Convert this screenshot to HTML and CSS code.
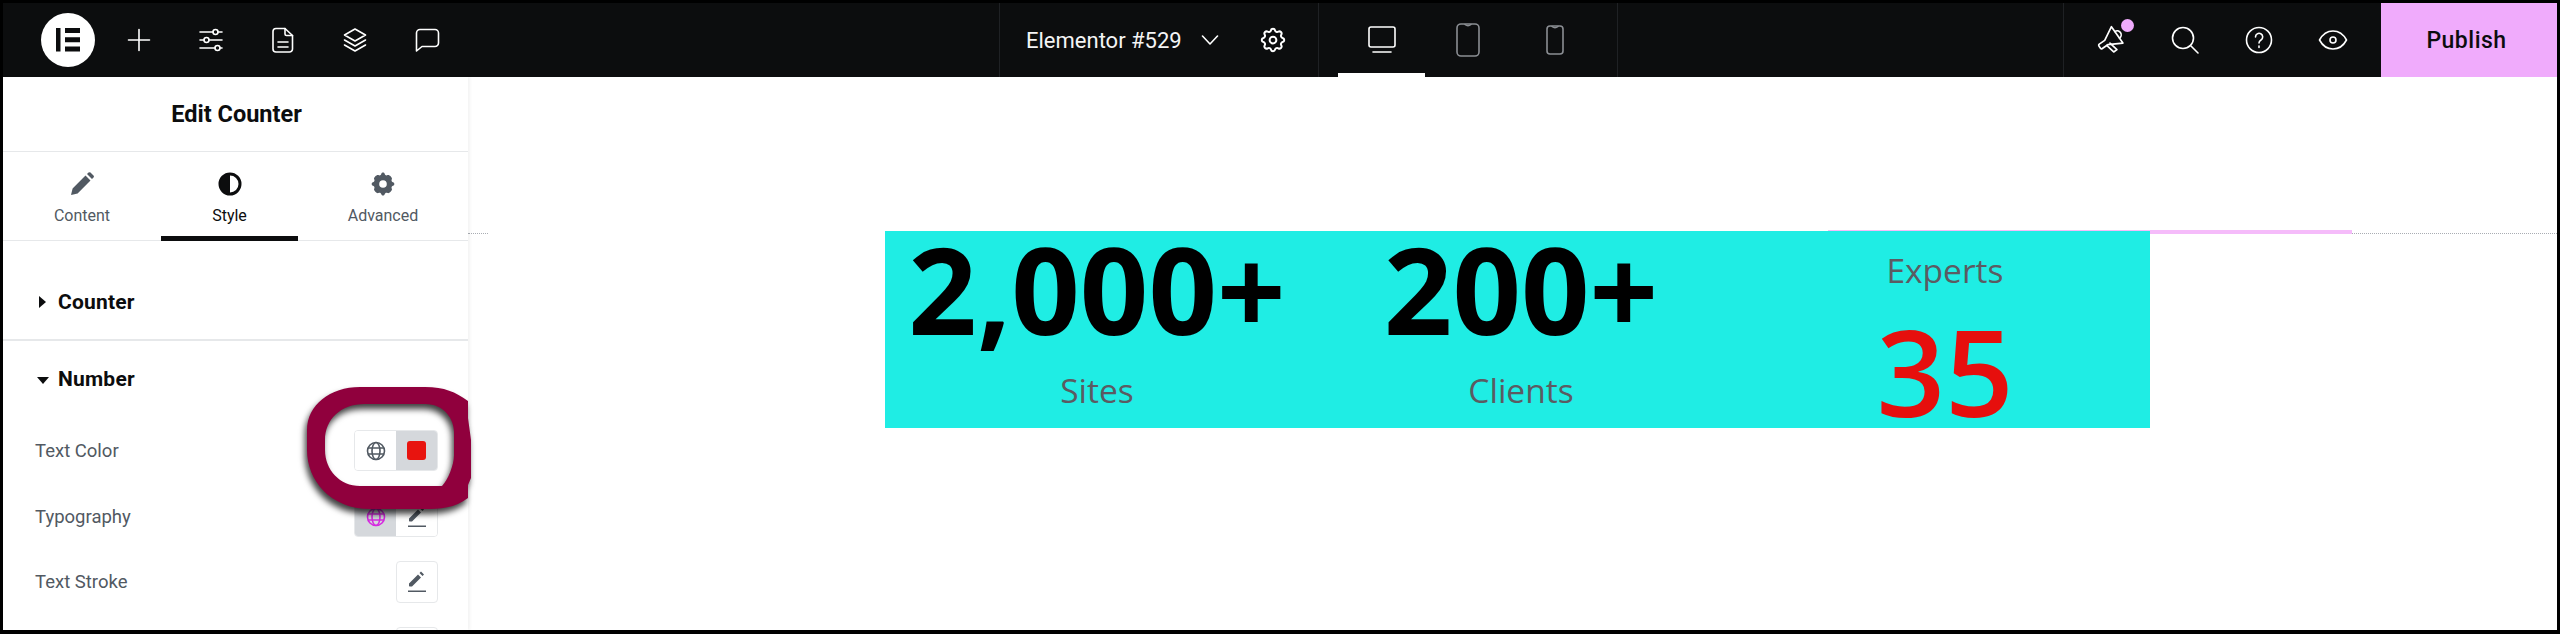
FILE: index.html
```html
<!DOCTYPE html>
<html lang="en">
<head>
<meta charset="utf-8">
<title>Elementor #529</title>
<link rel="stylesheet" href="styles.css">
</head>
<body>
<div class="frame">
  <header class="topbar">
    <div class="bar-left">
      <div class="logo">
        <svg width="24" height="24" viewBox="0 0 24 24"><path fill="#0c0d0e" d="M0 0h4.500v23.500H0zM9 0h15v5H9zM9 9.300h15v5H9zM9 18.500h15v5H9z"/></svg>
      </div>
      <div class="tb-btn"><svg width="24" height="24" viewBox="0 0 24 24" class="ln"><path d="M12 1.500v21M1.500 12h21"/></svg></div>
      <div class="tb-btn"><svg width="26" height="26" viewBox="0 0 26 26" class="ln"><path d="M2 5h13M20 5h4M2 13h4M11 13h13M2 21h15M22 21h2"/><circle cx="17.500" cy="5" r="2.500"/><circle cx="8.500" cy="13" r="2.500"/><circle cx="19.500" cy="21" r="2.500"/></svg></div>
      <div class="tb-btn"><svg width="24" height="26" viewBox="0 0 24 26" class="ln"><path d="M5 1.500h9l7.500 7V22a3 3 0 0 1-3 3H5a3 3 0 0 1-3-3V4.500a3 3 0 0 1 3-3z"/><path d="M14 1.500V7a1.500 1.500 0 0 0 1.500 1.500h6M7 15h10M7 20h10"/></svg></div>
      <div class="tb-btn"><svg width="26" height="26" viewBox="0 0 26 26" class="ln"><path d="M13 2l10.500 6L13 14 2.500 8z"/><path d="M2.500 13L13 19l10.500-6M2.500 18L13 24l10.500-6"/></svg></div>
      <div class="tb-btn"><svg width="26" height="26" viewBox="0 0 26 26" class="ln"><path d="M6 2.500h15a3.500 3.500 0 0 1 3.500 3.500v10a3.500 3.500 0 0 1-3.500 3.500H8L2.500 24V6A3.500 3.500 0 0 1 6 2.500z"/></svg></div>
    </div>
    <div class="bar-doc">
      <span class="doc-title">Elementor #529</span>
      <svg class="ln chev" width="18" height="10" viewBox="0 0 18 10"><path d="M1.500 1l7.500 8 7.500-8"/></svg>
      <svg class="ln gear" width="30" height="30" viewBox="0 0 24 24"><path d="M10.325 4.317c.426-1.756 2.924-1.756 3.35 0a1.724 1.724 0 0 0 2.573 1.066c1.543-.94 3.31.826 2.37 2.37a1.724 1.724 0 0 0 1.065 2.572c1.756.426 1.756 2.924 0 3.35a1.724 1.724 0 0 0-1.066 2.573c.94 1.543-.826 3.31-2.37 2.37a1.724 1.724 0 0 0-2.572 1.065c-.426 1.756-2.924 1.756-3.35 0a1.724 1.724 0 0 0-2.573-1.066c-1.543.94-3.31-.826-2.37-2.37a1.724 1.724 0 0 0-1.065-2.572c-1.756-.426-1.756-2.924 0-3.35a1.724 1.724 0 0 0 1.066-2.573c-.94-1.543.826-3.31 2.37-2.37 1 .608 2.296.07 2.572-1.065z"/><circle cx="12" cy="12" r="2.700"/></svg>
    </div>
    <div class="bar-devices">
      <div class="dev dev-active"><svg class="ln" width="28" height="28" viewBox="0 0 28 28"><rect x="1" y="1" width="26" height="20" rx="2"/><path d="M5 26h18"/></svg></div>
      <div class="dev dev-muted"><svg class="ln" width="24" height="34" viewBox="0 0 24 34"><rect x="1" y="1" width="22" height="32" rx="4"/><path d="M9 1.500q3 2.500 6 0"/></svg></div>
      <div class="dev dev-muted"><svg class="ln" width="18" height="30" viewBox="0 0 18 30"><rect x="1" y="1" width="16" height="28" rx="3"/><path d="M6 1.500q3 2.500 6 0"/></svg></div>
    </div>
    <div class="bar-space"></div>
    <div class="bar-tools">
      <div class="tool">
        <svg class="ln mega" width="32" height="32" viewBox="0 0 24 24"><g transform="rotate(-35 12 12)"><path d="M3 9.500h5l10-5.500v15l-10-5.500H3a1 1 0 0 1-1-1v-2a1 1 0 0 1 1-1z"/><path d="M7 13.500l1.500 7h3l-1.500-7M18 8.500a3 3 0 0 1 0 6"/></g></svg>
        <span class="dot"></span>
      </div>
      <div class="tool"><svg class="ln" width="28" height="28" viewBox="0 0 28 28"><circle cx="12" cy="12" r="10.500"/><path d="M19.500 19.500l7.500 7.500"/></svg></div>
      <div class="tool"><svg class="ln" width="28" height="28" viewBox="0 0 28 28"><circle cx="14" cy="14" r="12.500"/><path d="M10.500 11a3.600 3.600 0 1 1 5.500 3c-1.300.8-2 1.500-2 3M14 20v1.500"/></svg></div>
      <div class="tool"><svg class="ln" width="30" height="22" viewBox="0 0 30 22"><path d="M1.500 11C5 4.500 10 2 15 2s10 2.500 13.500 9C25 17.500 20 20 15 20S5 17.500 1.500 11z"/><circle cx="15" cy="11" r="3"/></svg></div>
    </div>
    <div class="publish">Publish</div>
  </header>

  <div class="workspace">
    <aside class="panel">
      <div class="panel-head">Edit Counter</div>
      <nav class="tabs">
        <div class="tab tab-content">
          <svg width="24" height="24" viewBox="0 0 24 24"><path fill="#515962" d="M1 23l1.600-6.600L15.500 3.500l5 5L7.600 21.400zM17 2l1.500-1.400a1.500 1.500 0 0 1 2 0l3 3a1.500 1.500 0 0 1 0 2L22 7z"/></svg>
          <span>Content</span>
        </div>
        <div class="tab tab-style tab-active">
          <svg width="24" height="24" viewBox="0 0 24 24"><circle cx="12" cy="12" r="10" fill="#fff" stroke="#0c0d0e" stroke-width="3"/><path fill="#0c0d0e" d="M12 2a10 10 0 0 0 0 20z"/></svg>
          <span>Style</span>
        </div>
        <div class="tab tab-adv">
          <svg width="24" height="24" viewBox="0 0 24 24"><path fill="#515962" d="M10.325 1.800c.426-1.756 2.924-1.756 3.350 0 .3 1.400 1.600 2 2.900 1.300 1.543-.94 5.200 2.700 4.260 4.250-.7 1.200-.2 2.500 1.200 2.900 1.756.426 1.756 3.200 0 3.600-1.400.4-1.900 1.700-1.200 2.900.94 1.543-2.700 5.200-4.260 4.250-1.300-.7-2.600-.1-2.900 1.300-.426 1.756-2.924 1.756-3.350 0-.3-1.400-1.600-2-2.900-1.300-1.543.94-5.200-2.700-4.260-4.250.7-1.200.2-2.500-1.200-2.900-1.756-.426-1.756-3.200 0-3.600 1.400-.4 1.900-1.700 1.200-2.900-.94-1.543 2.700-5.200 4.260-4.250 1.300.7 2.600.1 2.900-1.300z"/><circle cx="12" cy="12" r="3.800" fill="#fff"/></svg>
          <span>Advanced</span>
        </div>
      </nav>

      <section class="sec sec-closed">
        <h2 class="sec-title"><i class="tri-right"></i>Counter</h2>
      </section>
      <section class="sec sec-open">
        <h2 class="sec-title"><i class="tri-down"></i>Number</h2>
        <div class="row row-color">
          <span class="row-label">Text Color</span>
          <div class="seg">
            <div class="seg-cell"><svg class="globe" width="20" height="20" viewBox="0 0 20 20"><circle cx="10" cy="10" r="8.500"/><ellipse cx="10" cy="10" rx="4" ry="8.500"/><path d="M2 7h16M2 13h16"/></svg></div>
            <div class="seg-cell seg-on"><span class="swatch"></span></div>
          </div>
        </div>
        <div class="row row-typo">
          <span class="row-label">Typography</span>
          <div class="seg">
            <div class="seg-cell seg-on"><svg class="globe globe-pink" width="20" height="20" viewBox="0 0 20 20"><circle cx="10" cy="10" r="8.500"/><ellipse cx="10" cy="10" rx="4" ry="8.500"/><path d="M2 7h16M2 13h16"/></svg></div>
            <div class="seg-cell"><svg width="20" height="22" viewBox="0 0 20 22"><path fill="#515962" d="M2 15v-2.500L11 3.500 14 6.500 5 15.500H2.500zM12.500 2l1.500-1.500 3 3L15.500 5z"/><path fill="#515962" d="M1 19.500h18V21H1z"/></svg></div>
          </div>
        </div>
        <div class="row row-stroke">
          <span class="row-label">Text Stroke</span>
          <div class="single"><svg width="20" height="22" viewBox="0 0 20 22"><path fill="#515962" d="M2 15v-2.500L11 3.500 14 6.500 5 15.500H2.500zM12.500 2l1.500-1.500 3 3L15.500 5z"/><path fill="#515962" d="M1 19.500h18V21H1z"/></svg></div>
        </div>
        <div class="row row-next">
          <div class="single"></div>
        </div>
      </section>
    </aside>

    <main class="canvas">
      <div class="guide guide-a"></div>
      <div class="guide guide-b"></div>
      <div class="pink-line"></div>
      <div class="counters">
        <div class="counter">
          <div class="num">2,000+</div>
          <div class="cap">Sites</div>
        </div>
        <div class="counter">
          <div class="num">200+</div>
          <div class="cap">Clients</div>
        </div>
        <div class="counter counter-rev">
          <div class="cap">Experts</div>
          <div class="num num-red">35</div>
        </div>
      </div>
    </main>

    <svg class="ring" width="180" height="140" viewBox="0 0 180 140">
      <path fill="#90003d" fill-rule="evenodd" d="M60 7H125C145 7 155 12 168 21V38L171 60V98L168 105V118C155 128 140 129 125 129H70C30 129 7 100 7 70V50C7 25 30 7 60 7ZM65 24C40 24 25 40 25 60V70C25 90 40 106 60 106H142C148 100 154 85 154 75V52C154 40 145 24 125 24Z"/>
    </svg>
  </div>
</div>
</body>
</html>
```

FILE: styles.css
```css
* { box-sizing: border-box; }
html, body { margin: 0; padding: 0; background: #fff; }
body { font-family: Roboto, "Liberation Sans", sans-serif; }

.frame {
  width: 2560px;
  height: 634px;
  border: 3px solid #000;
  border-bottom-width: 4px;
  overflow: hidden;
  display: flex;
  flex-direction: column;
}

/* top bar */
.topbar {
  height: 74px;
  flex: none;
  display: flex;
  background: #0c0d0e;
  color: #fff;
}
.ln { fill: none; stroke: currentColor; stroke-width: 1.600; stroke-linecap: round; stroke-linejoin: round; }
.mega { stroke-width: 1.250; }
.bar-left { width: 997px; display: flex; align-items: center; padding-left: 38px; border-right: 1px solid #1f2124; }
.logo {
  width: 54px; height: 54px; border-radius: 50%; background: #fff;
  display: flex; align-items: center; justify-content: center;
  margin-right: 8px;
}
.tb-btn { width: 72px; display: flex; justify-content: center; align-items: center; }
.bar-doc { width: 319px; display: flex; align-items: center; padding-left: 26px; border-right: 1px solid #1f2124; }
.doc-title { font-size: 22px; color: #f4f4f5; width: 175px; white-space: nowrap; }
.chev { margin-right: 39px; }
.bar-devices { width: 299px; display: flex; padding-left: 19px; border-right: 1px solid #1f2124; }
.dev { width: 87px; display: flex; align-items: center; justify-content: center; }
.dev-active { border-bottom: 4px solid #fff; padding-top: 4px; }
.dev-muted { color: #8b8e93; }
.dev-muted svg { margin-left: -2px; }
.bar-space { width: 446px; border-right: 1px solid #1f2124; }
.bar-tools { width: 317px; display: flex; padding-left: 10px; }
.tool { width: 74px; display: flex; align-items: center; justify-content: center; position: relative; }
.dot {
  position: absolute; left: 47px; top: 16px;
  width: 13px; height: 13px; border-radius: 50%; background: #f0abfc;
}
.publish {
  flex: 1;
  background: #f0abfc;
  color: #0c0d0e;
  font-size: 23px;
  font-weight: 500;
  letter-spacing: .5px;
  padding-right: 5px;
  display: flex; align-items: center; justify-content: center;
}

/* workspace */
.workspace { flex: 1; display: flex; position: relative; min-height: 0; }
.panel {
  width: 465px; flex: none; background: #fff; overflow: hidden;
  box-shadow: 2px 0 3px rgba(0,0,0,.05);
  position: relative; z-index: 1;
}
.panel-head {
  height: 75px;
  display: flex; align-items: center; justify-content: center;
  font-size: 23.500px; font-weight: 700; color: #0c0d0e;
  border-bottom: 1px solid #e6e8ea;
  padding-left: 2px;
}
.tabs { height: 89px; display: flex; border-bottom: 1px solid #e6e8ea; }
.tab {
  display: flex; flex-direction: column; align-items: center;
  padding-top: 20px; font-size: 16px; color: #515962; height: 89px;
}
.tab span { margin-top: 10px; line-height: 19px; }
.tab-content { width: 158px; }
.tab-style { width: 137px; }
.tab-adv { width: 170px; }
.tab-active { color: #0c0d0e; border-bottom: 5px solid #0c0d0e; }

.sec { padding: 0 32px; }
.sec-closed { height: 100px; padding-top: 48px; border-bottom: 2px solid #e6e8ea; }
.sec-open { padding-top: 25px; }
.sec-title {
  margin: 0; font-size: 21px; line-height: 26px; font-weight: 700; color: #0c0d0e;
  padding-left: 23px; position: relative; letter-spacing: .2px;
}
.tri-right, .tri-down { position: absolute; width: 0; height: 0; border-style: solid; border-color: transparent; }
.tri-right { left: 4px; top: 7px; border-width: 6px 0 6px 7px; border-left-color: #0c0d0e; }
.tri-down { left: 2px; top: 11px; border-width: 7px 6px 0; border-top-color: #0c0d0e; }

.row { display: flex; align-items: center; justify-content: space-between; }
.row-label { font-size: 18.500px; color: #515962; }
.row-color { height: 41px; margin-top: 38px; }
.row-typo { height: 41px; margin-top: 25px; }
.row-stroke { height: 42px; margin-top: 24px; }
.row-next { height: 42px; margin-top: 24px; justify-content: flex-end; }
.seg {
  width: 84px; height: 100%; display: flex; border-radius: 4px;
  border: 1px solid #e6e8ea; overflow: hidden;
  margin-right: -2px;
}
.seg-cell { flex: 1; display: flex; align-items: center; justify-content: center; background: #fff; }
.seg-on { background: #d5d8dc; }
.swatch { width: 19px; height: 19px; border-radius: 3px; background: #e8140f; }
.globe { fill: none; stroke: #515962; stroke-width: 1.600; }
.globe-pink { stroke: #d62ae0; }
.single {
  width: 42px; height: 42px; border: 1px solid #e6e8ea; border-radius: 4px;
  display: flex; align-items: center; justify-content: center;
  margin-right: -2px; background: #fff;
}

/* canvas */
.canvas { flex: 1; position: relative; background: #fff; padding: 154px 0 0 417px; min-width: 0; }
.guide { position: absolute; top: 156px; border-top: 1px dotted #a9adb3; }
.guide-a { left: 0; width: 20px; }
.guide-b { left: 1683px; right: 0; }
.pink-line { position: absolute; left: 1360px; width: 524px; top: 153px; height: 4px; background: #f5bcfa; }
.counters {
  width: 1265px; height: 197px; background: #1fede4; position: relative;
  display: grid; grid-template-columns: repeat(3, 424px);
}
.counter { display: flex; flex-direction: column; align-items: center; font-family: "Open Sans", sans-serif; }
.num { font-size: 120px; line-height: 116px; font-weight: 700; color: #000; white-space: nowrap; }
.cap { font-size: 33.500px; line-height: 42px; color: #5b5b62; margin-top: 22px; }
.counter-rev { padding-top: 18px; }
.counter-rev .cap { margin-top: 0; }
.num-red { color: #e60f0d; margin-top: 22px; font-weight: 600; }

/* annotation ring */
.ring {
  position: absolute; left: 297px; top: 303px; z-index: 2;
  filter: drop-shadow(-2px 5px 3px rgba(0,0,0,.75));
}
```
